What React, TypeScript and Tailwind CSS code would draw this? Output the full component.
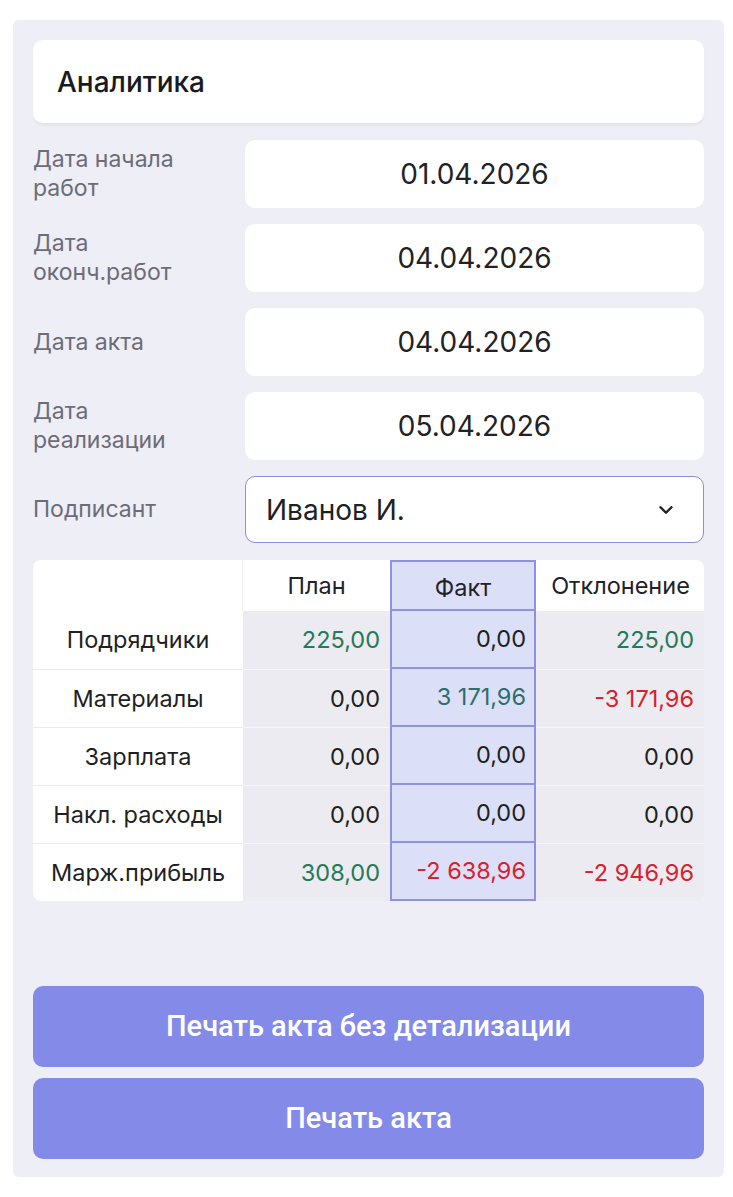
import { ChevronDown } from 'lucide-react'

type Row = {
	label: string;
	plan: string;
	fact: string;
	diff: string;
	planColor: string;
	factColor: string;
	diffColor: string;
};

const GREEN = 'text-[#257a58]';
const TEAL = 'text-[#2d6f6b]';
const RED = 'text-[#d6212f]';
const DARK = 'text-[#1f1f24]';

const rows: Row[] = [
	{ label: 'Подрядчики', plan: '225,00', fact: '0,00', diff: '225,00', planColor: GREEN, factColor: DARK, diffColor: GREEN },
	{ label: 'Материалы', plan: '0,00', fact: '3 171,96', diff: '-3 171,96', planColor: DARK, factColor: TEAL, diffColor: RED },
	{ label: 'Зарплата', plan: '0,00', fact: '0,00', diff: '0,00', planColor: DARK, factColor: DARK, diffColor: DARK },
	{ label: 'Накл. расходы', plan: '0,00', fact: '0,00', diff: '0,00', planColor: DARK, factColor: DARK, diffColor: DARK },
	{ label: 'Марж.прибыль', plan: '308,00', fact: '-2 638,96', diff: '-2 946,96', planColor: GREEN, factColor: RED, diffColor: RED },
];

const dates = [
	{ label: 'Дата начала работ', value: '01.04.2026' },
	{ label: 'Дата оконч.работ', value: '04.04.2026' },
	{ label: 'Дата акта', value: '04.04.2026' },
	{ label: 'Дата реализации', value: '05.04.2026' },
];

const FieldLabel = ({ children }: { children: React.ReactNode }) => (
	<div className="w-[212px] shrink-0 pr-6 text-[23px] leading-[29px] text-[#6c6c78]">{children}</div>
);

export default function App() {
	return (
		<div className="min-h-screen bg-white px-[13px] pt-5" style={{ fontFamily: 'Inter, "Noto Sans", sans-serif' }}>
			<div className="flex w-[711px] flex-col rounded-md bg-[#eeeef6] px-5 pt-5 pb-[18px]">
				<div className="flex h-[83px] items-center rounded-[10px] bg-white px-6 text-[28px] font-medium text-[#1a1a1f] shadow-[0_3px_2px_rgba(0,0,0,0.04)]">
					Аналитика
				</div>

				<div className="mt-[17px] flex flex-col gap-4">
					{dates.map((d) => (
						<div key={d.label} className="flex items-center">
							<FieldLabel>{d.label}</FieldLabel>
							<div className="flex h-[68px] flex-1 items-center justify-center rounded-[10px] bg-white text-[28px] text-[#222226]">
								{d.value}
							</div>
						</div>
					))}
					<div className="flex items-center">
						<FieldLabel>Подписант</FieldLabel>
						<div className="flex h-[67px] flex-1 items-center justify-between rounded-[10px] border-[1.5px] border-[#8a8fe0] bg-white pl-[20px] pr-[26px] text-[28px] text-[#1f1f24]">
							<span>Иванов И.</span>
							<ChevronDown size={22} strokeWidth={2.6} className="text-[#1f1f24]" />
						</div>
					</div>
				</div>

				<div className="mt-[17px] grid grid-cols-[210px_147px_146px_169px] overflow-hidden rounded-lg text-[23.5px]">
					<div className="h-[51px] border-r border-[#f1f1f4] bg-white" />
					<div className="flex h-[51px] items-center justify-center bg-white text-[#222226]">План</div>
					<div className="flex h-[51px] items-center justify-center border-2 border-[#8e92e2] bg-[#dcdff8] pt-1 text-[#222226]">Факт</div>
					<div className="flex h-[51px] items-center justify-center bg-white text-[#222226]">Отклонение</div>

					{rows.map((r, i) => (
						<div key={r.label} className="contents">
							<div className={`flex h-[58px] items-center justify-center bg-white text-[#1f1f24] ${i > 0 ? 'border-t border-[#ececef]' : ''}`}>
								{r.label}
							</div>
							<div className={`flex h-[58px] items-center justify-end bg-[#ebebf1] pr-[10px] ${r.planColor} ${i > 0 ? 'border-t border-[#f7f7fa]' : ''}`}>
								{r.plan}
							</div>
							<div className={`flex h-[58px] items-center justify-end border-x-2 border-b-2 border-[#8e92e2] bg-[#dcdff8] pr-[8px] ${r.factColor}`}>
								{r.fact}
							</div>
							<div className={`flex h-[58px] items-center justify-end bg-[#ebebf1] pr-[11px] ${r.diffColor} ${i > 0 ? 'border-t border-[#f7f7fa]' : ''}`}>
								{r.diff}
							</div>
						</div>
					))}
				</div>

				<div className="mt-[85px] flex flex-col gap-[11px]" style={{ fontFamily: 'Roboto, "Noto Sans", sans-serif' }}>
					<button className="h-[81px] rounded-[10px] bg-[#838ae8] text-[29px] font-medium text-white">
						Печать акта без детализации
					</button>
					<button className="h-[81px] rounded-[10px] bg-[#838ae8] text-[29px] font-medium text-white">
						Печать акта
					</button>
				</div>
			</div>
		</div>
	);
}
